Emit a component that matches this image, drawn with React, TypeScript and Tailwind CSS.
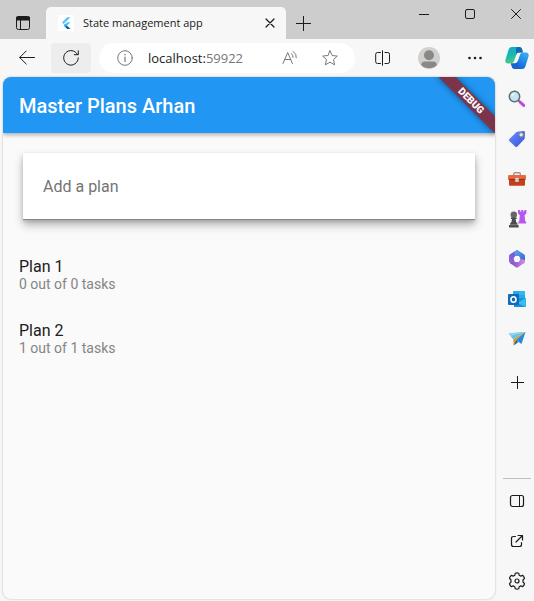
import type { ReactNode } from "react";

const plans = [
  { name: "Plan 1", done: 0, total: 0 },
  { name: "Plan 2", done: 1, total: 1 },
];

function IconButton({ label, className = "", children }: { label: string; className?: string; children: ReactNode }) {
  return (
    <button type="button" aria-label={label} className={`flex shrink-0 items-center justify-center ${className}`}>
      {children}
    </button>
  );
}

function Line({ size = 16, children, className = "text-[#1b1b1b]" }: { size?: number; children: ReactNode; className?: string }) {
  return (
    <svg width={size} height={size} viewBox={`0 0 ${size} ${size}`} fill="none" stroke="currentColor" strokeLinecap="round" strokeLinejoin="round" className={className} aria-hidden="true">
      {children}
    </svg>
  );
}

function FlutterLogo() {
  return (
    <svg width="16" height="16" viewBox="0 0 16 16" aria-hidden="true">
      <rect width="16" height="16" fill="#fff" />
      <path d="M9.2 2.2H12.5L5.7 9L4 7.4Z" fill="#54c5f8" />
      <path d="M9.2 7.2H12.5L9 10.7L7.3 9Z" fill="#54c5f8" />
      <path d="M5.7 10.6L7.3 9L9 10.7L12.5 14H9.2Z" fill="#01579b" />
      <path d="M5.7 10.6L7.3 9L9 10.6L7.4 12.2Z" fill="#29b6f6" />
    </svg>
  );
}

function CopilotLogo() {
  return (
    <svg width="24" height="24" viewBox="0 0 24 24" aria-hidden="true">
      <defs>
        <linearGradient id="cpA" x1="3" y1="1" x2="8" y2="18" gradientUnits="userSpaceOnUse">
          <stop stopColor="#16a4cf" /><stop offset=".5" stopColor="#19b9b0" /><stop offset="1" stopColor="#5ccd70" />
        </linearGradient>
        <linearGradient id="cpB" x1="22" y1="6" x2="12" y2="23" gradientUnits="userSpaceOnUse">
          <stop stopColor="#38b4ef" /><stop offset=".55" stopColor="#2384e8" /><stop offset="1" stopColor="#1b58c9" />
        </linearGradient>
      </defs>
      <path d="M7 1H14C16 1 16.8 2.2 17.3 4L18 6.6H14.5C12.5 6.6 11.8 7.4 11.2 9L9.3 14.6C8.6 16.8 7.5 17.6 5.3 17.6H3C.7 17.6-.1 15.7.5 13.5L3.4 4.2C4.1 2 5 1 7 1Z" fill="url(#cpA)" />
      <path d="M12.5 1H14.2C16 1 16.8 2.2 17.3 4L18 6.6H14.5C12.6 6.6 11.8 7.4 11.2 9L11 4C11 2 11.6 1 12.5 1Z" fill="#1268b4" />
      <path d="M17 23H10C8 23 7.2 21.8 6.7 20L6 17.4H9.5C11.5 17.4 12.2 16.6 12.8 15L14.7 9.4C15.4 7.2 16.5 6.4 18.7 6.4H21C23.3 6.4 24.1 8.3 23.5 10.5L20.6 19.8C19.9 22 19 23 17 23Z" fill="url(#cpB)" />
      <path d="M6 17.4H9.5C11.5 17.4 12.2 16.6 12.8 15L13 20C13 22 12 23 10.5 23C8 23 7.2 21.8 6.7 20Z" fill="#1764ce" />
    </svg>
  );
}

function SearchIcon() {
  return (
    <svg width="18" height="18" viewBox="0 0 18 18" aria-hidden="true">
      <path d="M10.5 10.5L12 12" stroke="#777" strokeWidth="2" />
      <path d="M12 12L15.7 15.4" stroke="#c044e5" strokeWidth="3" strokeLinecap="round" />
      <circle cx="6.5" cy="6.5" r="5.2" fill="#c4e5f4" stroke="#626b70" strokeWidth="1.5" />
      <path d="M4 6A2.7 2.7 0 0 1 6.5 3.7" stroke="#effbff" strokeWidth="1.3" fill="none" />
    </svg>
  );
}

function TagIcon() {
  return (
    <svg width="18" height="18" viewBox="0 0 18 18" aria-hidden="true">
      <defs><linearGradient id="tag" x2="1" y2="1"><stop stopColor="#6c91ff" /><stop offset="1" stopColor="#3852d4" /></linearGradient></defs>
      <path d="M9.2 1.8L15.5 1Q17 .9 17 2.4L16.7 8.2Q16.6 9 16 9.6L9.4 16.5Q8.3 17.5 7.2 16.5L1.3 11Q.4 10 1.4 9L8 2.5Q8.5 1.9 9.2 1.8Z" fill="url(#tag)" />
      <circle cx="13.2" cy="4.8" r="1.8" fill="#fff0b0" stroke="#b7a96b" strokeWidth=".7" />
    </svg>
  );
}

function ToolboxIcon() {
  return (
    <svg width="18" height="18" viewBox="0 0 18 18" aria-hidden="true">
      <path d="M5.7 6V4Q5.7 2.7 7 2.7H11Q12.3 2.7 12.3 4V6" fill="none" stroke="#9b9797" strokeWidth="1.4" />
      <rect y="5" width="18" height="4.5" rx="1.2" fill="#e9673e" />
      <path d="M1 9H17V14.5Q17 15.7 15.8 15.7H2.2Q1 15.7 1 14.5Z" fill="#c63f1c" />
      <path d="M.6 9.4H17.4" stroke="#8b3019" />
      <rect x="7.2" y="7.7" width="3.6" height="4.3" rx=".8" fill="#d8cccb" />
    </svg>
  );
}

function GamesIcon() {
  return (
    <svg width="20" height="20" viewBox="0 0 20 20" aria-hidden="true">
      <path d="M11 1H13.1V2.5H14.2V1H16.2V2.5H17.3V1H19.4V4.6L17.6 6.2L18.2 12.4H19.1V14.5H11.3V12.4H12.2L12.8 6.2L11 4.6Z" fill="#b757ee" />
      <circle cx="6.8" cy="5.7" r="3.2" fill="#666" />
      <path d="M4 8.5H9.6V10H8.6Q8.6 13 10.4 14.2V16H11.6V18.6H2V16H3.2V14.2Q5 13 5 10H4Z" fill="#4b4b4b" />
      <path d="M3.2 15.8H10.4" stroke="#858585" />
    </svg>
  );
}

function OfficeIcon() {
  return (
    <svg width="18" height="18" viewBox="0 0 18 18" aria-hidden="true">
      <defs>
        <linearGradient id="of1" y1="1" x2="1"><stop stopColor="#a760e3" /><stop offset="1" stopColor="#495bd0" /></linearGradient>
        <linearGradient id="of2" x2="1" y2="1"><stop stopColor="#64a7ea" /><stop offset="1" stopColor="#315ccb" /></linearGradient>
        <linearGradient id="of3"><stop stopColor="#7141ba" /><stop offset="1" stopColor="#df8cec" /></linearGradient>
      </defs>
      <path d="M9 .3Q9.8.3 10.5.8L7.2 6.2L5.8 8.6L6.8 11.6L3.8 14.2L2 13Q1 12.3 1 11V6.2Q1 4.9 2 4.3L7.7.7Q8.3.3 9 .3Z" fill="url(#of1)" />
      <path d="M9 .3Q9.8.3 10.5.8L16 4.2Q17 4.9 17 6.2V11Q17 12.3 16 13L14.5 14L11.2 11.6L12.2 8.6L10.8 6H7.2L6.4 3Q6.8 1.5 9 .3Z" fill="url(#of2)" />
      <path d="M1.5 12.5Q4 14 6.5 11.8L11.2 11.8L12.2 9L17 10V11Q17 12.3 16 13L10.2 17.2Q9 18 7.8 17.2L2 13Z" fill="url(#of3)" />
      <path d="M7.2 6H10.8L12.4 9L10.8 12H7.2L5.6 9Z" fill="#f7f7f7" />
    </svg>
  );
}

function OutlookIcon() {
  return (
    <svg width="18" height="18" viewBox="0 0 18 18" aria-hidden="true">
      <rect x="5" y="1" width="12" height="10" rx="1" fill="#28a8ea" />
      <path d="M5 5H11V10H5Z" fill="#0078d4" /><path d="M11 1H16Q17 1 17 2V5H11Z" fill="#35b8f1" />
      <path d="M6 9L18 8V16Q18 17 17 17H6Z" fill="#1490df" /><path d="M18 8L9 13L17.7 17Z" fill="#38bdec" />
      <rect y="4" width="11" height="11" rx="1" fill="#0f6cbd" />
      <ellipse cx="5.5" cy="9.5" rx="2.5" ry="2.7" fill="none" stroke="#fff" strokeWidth="1.6" />
    </svg>
  );
}

function DropIcon() {
  return (
    <svg width="18" height="18" viewBox="0 0 18 18" aria-hidden="true">
      <path d="M.7 3.2L17.5 2L5.2 9.6Z" fill="#62c4ed" />
      <path d="M5.2 9.6L17.5 2L5.7 15.4Z" fill="#d79a2c" />
      <path d="M.7 3.2L17.5 2L3.8 5.8Z" fill="#8ed5f2" />
      <path d="M17.5 2L13.5 14L8.2 10.3Z" fill="#2689df" />
      <path d="M5.7 15.4L8.2 10.3L10.2 12.2Z" fill="#2465aa" />
    </svg>
  );
}

function PlusIcon({ size }: { size: number }) {
  return (
    <svg width={size} height={size} viewBox={`0 0 ${size} ${size}`} fill="none" stroke="#1b1b1b" aria-hidden="true">
      <path d={`M${size / 2} 0V${size}M0 ${size / 2}H${size}`} />
    </svg>
  );
}

function TitleBar() {
  return (
    <header className="flex h-[39px] bg-[#cdcdcd]">
      <IconButton label="Tab actions" className="w-[46px] pt-[7px]">
        <Line>
          <rect x="1.5" y="1.5" width="13" height="13" rx="2" />
          <path d="M2 2.5H14V4.5H2Z" strokeWidth="2" />
          <path d="M5.5 5V14" />
        </Line>
      </IconButton>
      <div className="mt-[7px] flex w-[240px] items-center rounded-t-[5px] bg-[#f7f7f7] pl-3 pr-2">
        <FlutterLogo />
        <span className="ml-[9px] flex-1 whitespace-nowrap text-[11px] leading-4 text-[#1b1b1b]">State management app</span>
        <IconButton label="Close tab" className="size-4">
          <Line size={10}><path d="M1 1L9 9M9 1L1 9" strokeWidth="1.2" /></Line>
        </IconButton>
      </div>
      <IconButton label="New tab" className="w-[35px] pt-[7px]"><PlusIcon size={15} /></IconButton>
      <div className="ml-auto flex h-7">
        <IconButton label="Minimize" className="w-[46px]"><Line size={10}><path d="M0 5.5H10" /></Line></IconButton>
        <IconButton label="Maximize" className="w-[46px]"><Line size={10}><rect x=".5" y=".5" width="9" height="9" rx="1.5" /></Line></IconButton>
        <IconButton label="Close" className="w-[41px] pl-[5px]"><Line size={10}><path d="M.5.5L9.5 9.5M9.5.5L.5 9.5" /></Line></IconButton>
      </div>
    </header>
  );
}

function Toolbar() {
  return (
    <div className="flex h-[38px] items-center pl-[7px]">
      <IconButton label="Back" className="h-[30px] w-10">
        <Line size={16}><path d="M15.5 7.5H.8M7.2 1L.7 7.5L7.2 14" /></Line>
      </IconButton>
      <IconButton label="Refresh" className="ml-1 h-[30px] w-10 rounded bg-[#ededed]">
        <Line size={16}><path d="M14.5 4.5A7.3 7.3 0 1 0 15.3 8M15.3.8V4.7H11.3" /></Line>
      </IconButton>
      <div className="ml-2 flex h-[30px] min-w-0 flex-1 items-center rounded-full bg-white pl-[18px] pr-[17px]">
        <Line className="shrink-0 text-[#777]"><circle cx="8" cy="8" r="7.3" /><path d="M8 7V11.5" strokeWidth="1.2" /><path d="M8 4.5V4.7" strokeWidth="1.4" /></Line>
        <span className="ml-[15px] flex-1 whitespace-nowrap text-[13px] leading-5 text-[#1b1b1b]">localhost:<span className="text-[#767676]">59922</span></span>
        <IconButton label="Read aloud" className="mr-6">
          <Line className="text-[#777]"><path d="M1 13.5L5.7 2.5L10.4 13.5M2.8 9.5H8.7M9.5 3.5Q11.2 5 11 7.4M11.2 1.5Q14.9 4 14.3 7.8" /></Line>
        </IconButton>
        <IconButton label="Add to favorites">
          <Line className="text-[#777]"><path d="M8 .8L10.2 5.5L15.3 6.1L11.5 9.6L12.6 14.8L8 12.2L3.4 14.8L4.5 9.6L.7 6.1L5.8 5.5Z" /></Line>
        </IconButton>
      </div>
      <IconButton label="Split screen" className="ml-2 h-[30px] w-10">
        <Line><path d="M5.5 2.5H2.5Q.7 2.5.7 4.3V11.7Q.7 13.5 2.5 13.5H5.5M10 2.5H12.7Q14.5 2.5 14.5 4.3V11.7Q14.5 13.5 12.7 13.5H10M7.5.7V15.3" /></Line>
      </IconButton>
      <IconButton label="Profile" className="ml-[6px] h-[30px] w-10">
        <svg width="22" height="22" viewBox="0 0 22 22" aria-hidden="true">
          <circle cx="11" cy="11" r="11" fill="#d2d0ce" /><circle cx="11" cy="8.3" r="5" fill="#8a8886" />
          <path d="M3.2 18C3.2 15.5 5 14.5 7 14.5H15C17 14.5 18.8 15.5 18.8 18A11 11 0 0 1 3.2 18Z" fill="#8a8886" />
        </svg>
      </IconButton>
      <IconButton label="Settings and more" className="ml-[6px] h-[30px] w-10">
        <svg width="16" height="16" viewBox="0 0 16 16" fill="#1b1b1b" aria-hidden="true"><circle cx="2.5" cy="8" r="1.3" /><circle cx="8" cy="8" r="1.3" /><circle cx="13.5" cy="8" r="1.3" /></svg>
      </IconButton>
      <IconButton label="Copilot" className="ml-[5px] w-[34px]"><CopilotLogo /></IconButton>
    </div>
  );
}

function PlannerApp() {
  return (
    <main className="relative ml-[3px] mb-[2px] min-w-0 flex-1 overflow-hidden rounded-lg bg-[#fafafa] font-[Roboto,sans-serif] shadow-[0_0_2px_#0000004d]">
      <h1 className="flex h-14 items-center bg-[#2196f3] px-4 pt-[2px] text-[20px] font-medium leading-6 text-white shadow-[0_2px_4px_#0000004d]">Master Plans Arhan</h1>
      <div className="mx-5 mt-5 bg-white shadow-[0_5px_9px_#00000045,0_2px_4px_#00000024]">
        <input aria-label="Add a plan" placeholder="Add a plan" className="block h-[67px] w-full border-b border-[#858585] bg-transparent px-5 text-[16px] leading-5 outline-none placeholder:text-[#747474] placeholder:opacity-100" />
      </div>
      <ul className="mt-6">
        {plans.map((plan) => (
          <li key={plan.name} className="flex h-16 flex-col justify-center px-4 pb-[2px]">
            <span className="text-[16px] leading-[18px] text-[#212121]">{plan.name}</span>
            <span className="text-[14px] leading-4 text-[#858585]">{plan.done} out of {plan.total} tasks</span>
          </li>
        ))}
      </ul>
      <div className="pointer-events-none absolute right-0 top-0 flex size-12 items-center justify-center">
        <div className="flex h-3 w-20 shrink-0 rotate-45 items-center justify-center bg-[#7d344b] text-[10px] font-black leading-3 text-white shadow-[0_0_6px_#0000007f]">DEBUG</div>
      </div>
    </main>
  );
}

function Sidebar() {
  const apps = [
    { label: "Search", icon: <SearchIcon /> },
    { label: "Shopping", icon: <TagIcon /> },
    { label: "Tools", icon: <ToolboxIcon /> },
    { label: "Games", icon: <GamesIcon /> },
    { label: "Microsoft 365", icon: <OfficeIcon /> },
    { label: "Outlook", icon: <OutlookIcon /> },
    { label: "Drop", icon: <DropIcon /> },
  ];
  return (
    <nav aria-label="Sidebar" className="ml-[5px] flex w-[34px] shrink-0 flex-col pt-[2px]">
      {apps.map((app) => (
        <IconButton key={app.label} label={app.label} className="h-10 w-full">{app.icon}</IconButton>
      ))}
      <IconButton label="Customize" className="mt-[3px] h-10 w-full"><PlusIcon size={13} /></IconButton>
      <div className="mx-[3px] mt-auto mb-[2px] h-px bg-[#bdbdbd]" />
      <IconButton label="Hide sidebar" className="h-10 w-full">
        <Line><rect x="1.5" y="2.5" width="13" height="11" rx="2" strokeWidth="1.2" /><path d="M10.5 3V13" /></Line>
      </IconButton>
      <IconButton label="Open in new window" className="h-10 w-full">
        <Line><path d="M6.5 3.5H4.5Q2.5 3.5 2.5 5.5V11.5Q2.5 13.5 4.5 13.5H10.5Q12.5 13.5 12.5 11.5V9.5M9 2.5H13.5V7M13 3L7 9" strokeWidth="1.2" /></Line>
      </IconButton>
      <IconButton label="Settings" className="h-10 w-full">
        <Line size={18}>
          <path d="M7.3 1.2Q9 .6 10.7 1.2L11.2 3.3L12.6 4.1L14.8 3.4Q16 4.7 16.5 6.3L15 8V10L16.5 11.7Q16 13.3 14.8 14.6L12.6 13.9L11.2 14.7L10.7 16.8Q9 17.4 7.3 16.8L6.8 14.7L5.4 13.9L3.2 14.6Q2 13.3 1.5 11.7L3 10V8L1.5 6.3Q2 4.7 3.2 3.4L5.4 4.1L6.8 3.3Z" strokeWidth="1.2" />
          <circle cx="9" cy="9" r="2" strokeWidth="1.2" />
        </Line>
      </IconButton>
    </nav>
  );
}

export default function App() {
  return (
    <div className="flex min-h-screen flex-col bg-[#f7f7f7] font-['Open_Sans',sans-serif]">
      <TitleBar />
      <Toolbar />
      <div className="flex flex-1">
        <PlannerApp />
        <Sidebar />
      </div>
    </div>
  );
}
